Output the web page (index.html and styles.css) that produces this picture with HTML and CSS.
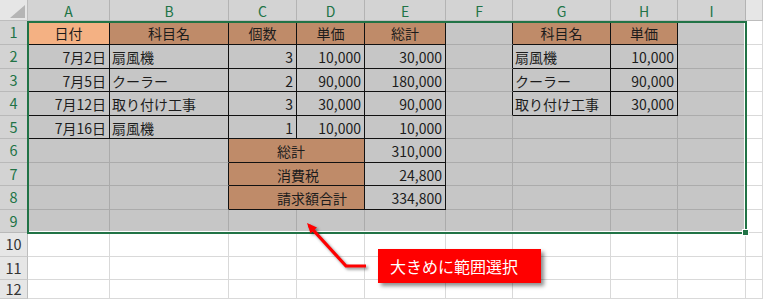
FILE: index.html
```html
<!DOCTYPE html>
<html lang="ja">
<head>
<meta charset="utf-8">
<title>範囲選択</title>
<link rel="stylesheet" href="styles.css">
</head>
<body>
<div class="sheet">
  <div class="grid">
    <!-- header row -->
    <div class="corner"><span class="tri"></span></div>
    <div class="ch sel">A</div>
    <div class="ch sel">B</div>
    <div class="ch sel">C</div>
    <div class="ch sel">D</div>
    <div class="ch sel">E</div>
    <div class="ch sel">F</div>
    <div class="ch sel">G</div>
    <div class="ch sel">H</div>
    <div class="ch sel">I</div>
    <div class="ch"></div>

    <!-- row 1 -->
    <div class="rh sel">1</div>
    <div class="c act bk ctr">日付</div>
    <div class="c o bk ctr">科目名</div>
    <div class="c o bk ctr">個数</div>
    <div class="c o bk ctr">単価</div>
    <div class="c o bk ctr">総計</div>
    <div class="c s bkr"></div>
    <div class="c o bk ctr">科目名</div>
    <div class="c o bk ctr">単価</div>
    <div class="c s"></div>
    <div class="c"></div>

    <!-- row 2 -->
    <div class="rh sel">2</div>
    <div class="c s bk r">7月2日</div>
    <div class="c s bk l">扇風機</div>
    <div class="c s bk r">3</div>
    <div class="c s bk r">10,000</div>
    <div class="c s bk r">30,000</div>
    <div class="c s bkr"></div>
    <div class="c s bk l">扇風機</div>
    <div class="c s bk r">10,000</div>
    <div class="c s"></div>
    <div class="c"></div>

    <!-- row 3 -->
    <div class="rh sel">3</div>
    <div class="c s bk r">7月5日</div>
    <div class="c s bk l">クーラー</div>
    <div class="c s bk r">2</div>
    <div class="c s bk r">90,000</div>
    <div class="c s bk r">180,000</div>
    <div class="c s bkr"></div>
    <div class="c s bk l">クーラー</div>
    <div class="c s bk r">90,000</div>
    <div class="c s"></div>
    <div class="c"></div>

    <!-- row 4 -->
    <div class="rh sel">4</div>
    <div class="c s bk r">7月12日</div>
    <div class="c s bk l">取り付け工事</div>
    <div class="c s bk r">3</div>
    <div class="c s bk r">30,000</div>
    <div class="c s bk r">90,000</div>
    <div class="c s bkr"></div>
    <div class="c s bk l">取り付け工事</div>
    <div class="c s bk r">30,000</div>
    <div class="c s"></div>
    <div class="c"></div>

    <!-- row 5 -->
    <div class="rh sel">5</div>
    <div class="c s bk r">7月16日</div>
    <div class="c s bk l">扇風機</div>
    <div class="c s bk r">1</div>
    <div class="c s bk r">10,000</div>
    <div class="c s bk r">10,000</div>
    <div class="c s"></div>
    <div class="c s"></div>
    <div class="c s"></div>
    <div class="c s"></div>
    <div class="c"></div>

    <!-- row 6 -->
    <div class="rh sel">6</div>
    <div class="c s"></div>
    <div class="c s bkr"></div>
    <div class="c o bk ind span2">総計</div>
    <div class="c s bk r">310,000</div>
    <div class="c s"></div>
    <div class="c s"></div>
    <div class="c s"></div>
    <div class="c s"></div>
    <div class="c"></div>

    <!-- row 7 -->
    <div class="rh sel">7</div>
    <div class="c s"></div>
    <div class="c s bkr"></div>
    <div class="c o bk ind span2">消費税</div>
    <div class="c s bk r">24,800</div>
    <div class="c s"></div>
    <div class="c s"></div>
    <div class="c s"></div>
    <div class="c s"></div>
    <div class="c"></div>

    <!-- row 8 -->
    <div class="rh sel">8</div>
    <div class="c s"></div>
    <div class="c s bkr"></div>
    <div class="c o bk ind span2">請求額合計</div>
    <div class="c s bk r">334,800</div>
    <div class="c s"></div>
    <div class="c s"></div>
    <div class="c s"></div>
    <div class="c s"></div>
    <div class="c"></div>

    <!-- row 9 -->
    <div class="rh sel">9</div>
    <div class="c s"></div>
    <div class="c s"></div>
    <div class="c s"></div>
    <div class="c s"></div>
    <div class="c s"></div>
    <div class="c s"></div>
    <div class="c s"></div>
    <div class="c s"></div>
    <div class="c s"></div>
    <div class="c"></div>

    <!-- row 10 -->
    <div class="rh">10</div>
    <div class="c"></div><div class="c"></div><div class="c"></div><div class="c"></div><div class="c"></div>
    <div class="c"></div><div class="c"></div><div class="c"></div><div class="c"></div><div class="c"></div>

    <!-- row 11 -->
    <div class="rh">11</div>
    <div class="c"></div><div class="c"></div><div class="c"></div><div class="c"></div><div class="c"></div>
    <div class="c"></div><div class="c"></div><div class="c"></div><div class="c"></div><div class="c"></div>

    <!-- row 12 -->
    <div class="rh">12</div>
    <div class="c"></div><div class="c"></div><div class="c"></div><div class="c"></div><div class="c"></div>
    <div class="c"></div><div class="c"></div><div class="c"></div><div class="c"></div><div class="c"></div>
  </div>

  <div class="selection"></div>
  <div class="handle"></div>

  <svg class="arrow" width="90" height="65" viewBox="0 0 90 65">
    <polyline points="14,10.5 51,51 71,51" fill="none" stroke="#ff0000" stroke-width="3.2" stroke-linejoin="miter"/>
    <polygon points="12,8 22,12.5 15.5,18.5" fill="#ff0000"/>
  </svg>

  <div class="callout">大きめに範囲選択</div>
</div>
</body>
</html>
```

FILE: styles.css
```css
* {
  box-sizing: border-box;
}

html, body {
  margin: 0;
  padding: 0;
  background: #ffffff;
  overflow: hidden;
}

.sheet {
  position: relative;
  width: 763px;
  height: 299px;
  font-family: "Noto Sans CJK JP", "Noto Sans", sans-serif;
  font-size: 14px;
  color: #1c1c1c;
}

.grid {
  display: grid;
  grid-template-columns: 28px 82px 119px 68px 68px 81px 67px 98px 67px 68px 1fr;
  grid-template-rows: 21px 24px 24px 23px 24px 23px 24px 23px 24px 23px 24px 23px 19px;
  width: 763px;
  height: 299px;
}

/* header cells */
.corner {
  background: #e6e6e6;
  border-right: 1px solid #bdbdbd;
  border-bottom: 1px solid #bdbdbd;
  display: flex;
  justify-content: flex-end;
  align-items: flex-end;
  padding: 0 2px 2px 0;
}

.tri {
  width: 15px;
  height: 13px;
  background: #b5b5b5;
  clip-path: polygon(100% 0, 100% 100%, 0 100%);
}

.ch {
  background: #e6e6e6;
  border-right: 1px solid #c6c6c6;
  border-bottom: 1px solid #bdbdbd;
  display: flex;
  align-items: center;
  justify-content: center;
  color: #444444;
  font-size: 14px;
  line-height: 1;
  padding-top: 1px;
}

.ch.sel {
  background: #d3d3d3;
  color: #217346;
  border-right-color: #b3b3b3;
}

.rh {
  background: #e6e6e6;
  border-right: 1px solid #bdbdbd;
  border-bottom: 1px solid #c9c9c9;
  display: flex;
  align-items: center;
  justify-content: center;
  color: #333333;
  font-size: 14.5px;
  line-height: 1;
}

.rh.sel {
  background: #d3d3d3;
  color: #217346;
  border-bottom-color: #b9b9b9;
}

/* cells */
.c {
  background: #ffffff;
  border-right: 1px solid #d9d9d9;
  border-bottom: 1px solid #d9d9d9;
  display: flex;
  align-items: center;
  white-space: nowrap;
  overflow: hidden;
  line-height: 1;
  padding-top: 1px;
}

.c.s {
  background: #c6c6c6;
  border-right-color: #ababab;
  border-bottom-color: #ababab;
}

.c.o {
  background: #bf8b69;
  border-right-color: #ababab;
  border-bottom-color: #ababab;
}

.c.act {
  background: #f4b183;
}

.c.bk {
  border-right-color: #111111;
  border-bottom-color: #111111;
}

.c.bkr {
  border-right-color: #111111;
}

.ctr {
  justify-content: center;
}

.r {
  justify-content: flex-end;
  padding-right: 3px;
}

.l {
  justify-content: flex-start;
  padding-left: 2px;
}

.ind {
  justify-content: flex-start;
  padding-left: 48px;
}

.span2 {
  grid-column: span 2;
}

/* selection frame over the range A1:I9 */
.selection {
  position: absolute;
  left: 27px;
  top: 21px;
  width: 720px;
  height: 213px;
  border: 2px solid #217346;
  box-shadow: inset -1px -1px 0 #ffffff;
  pointer-events: none;
}

.handle {
  position: absolute;
  left: 742px;
  top: 229px;
  width: 7px;
  height: 7px;
  background: #217346;
  border: 1px solid #ffffff;
}

/* annotation */
.arrow {
  position: absolute;
  left: 295px;
  top: 215px;
  filter: drop-shadow(2px 2px 1.5px rgba(0, 0, 0, 0.45));
}

.callout {
  position: absolute;
  left: 378px;
  top: 249px;
  width: 163px;
  height: 34px;
  background: #ff0000;
  color: #ffffff;
  font-size: 16px;
  line-height: 34px;
  padding-left: 12px;
  box-shadow: 3px 3px 4px rgba(0, 0, 0, 0.45);
  white-space: nowrap;
}
```
